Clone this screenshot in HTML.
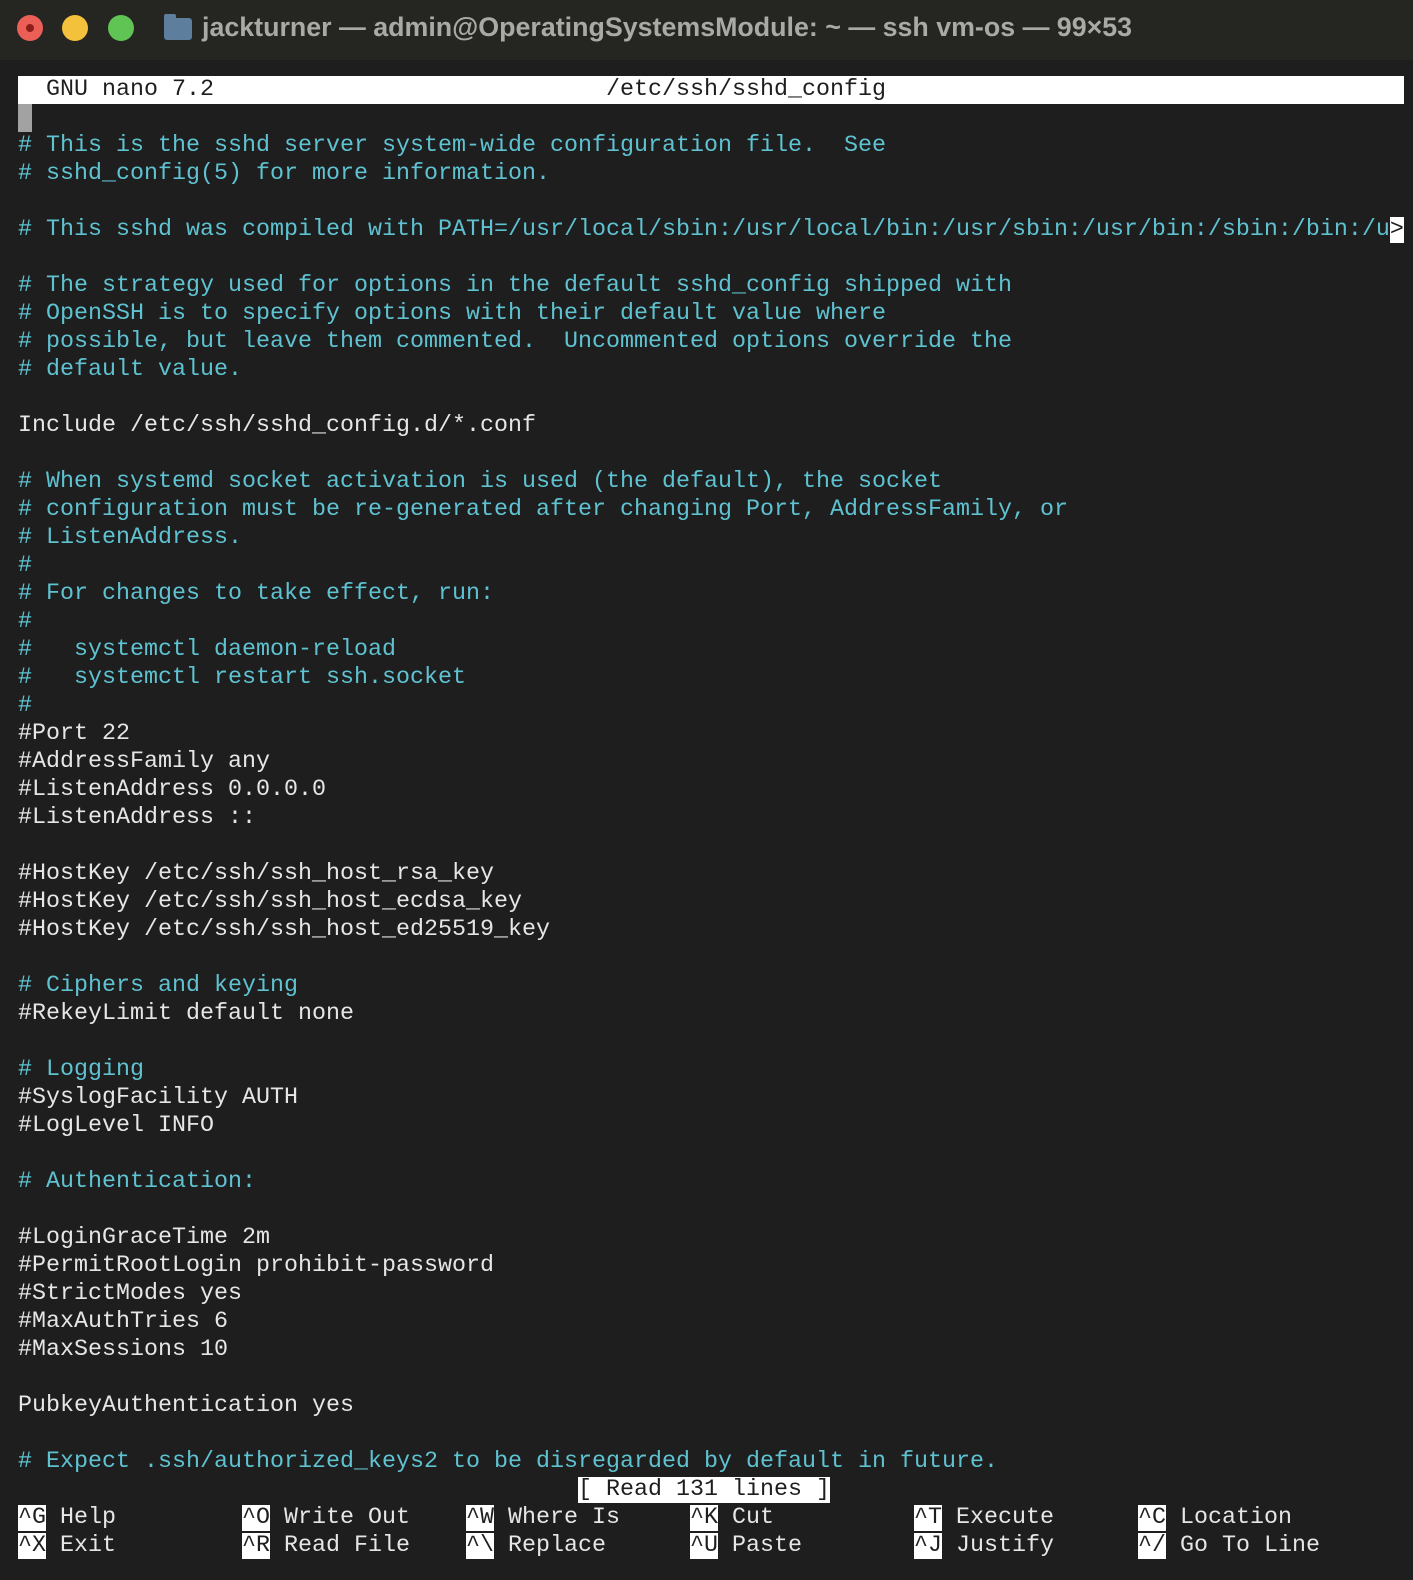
<!DOCTYPE html>
<html><head><meta charset="utf-8"><style>
html,body{margin:0;padding:0;background:#1e1e1e;}
body{width:1413px;height:1580px;position:relative;overflow:hidden;font-family:"Liberation Mono",monospace;}
.title{position:absolute;left:0;top:0;width:1413px;height:60px;background:#252522;}
.dot{position:absolute;top:15px;width:26px;height:26px;border-radius:50%;}
.ttext{position:absolute;left:202px;top:12px;font-family:"Liberation Sans",sans-serif;font-weight:bold;font-size:26.8px;color:#a9a9a6;white-space:nowrap;letter-spacing:0px;}
.folder{position:absolute;left:164px;top:18px;width:28px;height:22px;background:#5d7e9c;border-radius:3px;}
.folder:before{content:"";position:absolute;left:0;top:-4px;width:12px;height:6px;background:#5d7e9c;border-radius:2px 2px 0 0;}
pre{position:absolute;left:18px;top:76px;margin:0;font-family:"Liberation Mono",monospace;font-size:23.33px;line-height:28px;color:#e6e6e6;white-space:pre;}
.c{color:#5fc2d1;}
.inv{background:#fff;color:#1e1e1e;}
.bar{display:inline-block;width:1386px;background:#fff;color:#1e1e1e;height:28px;vertical-align:top;}
.cur{display:inline-block;width:14px;height:28px;background:#a2a2a2;vertical-align:top;}
</style></head><body>
<div class="title">
<div class="dot" style="left:17px;background:#ec5f56;"><div style="position:absolute;left:9px;top:9px;width:8px;height:8px;border-radius:50%;background:#8d1d18;"></div></div>
<div class="dot" style="left:62px;background:#f4c13c;"></div>
<div class="dot" style="left:108px;background:#5fc454;"></div>
<div class="folder"></div>
<div class="ttext">jackturner — admin@OperatingSystemsModule: ~ — ssh vm-os — 99×53</div>
</div>
<pre><span class="bar">  GNU nano 7.2                            /etc/ssh/sshd_config</span>
<span class="cur"></span>
<span class="c"># This is the sshd server system-wide configuration file.  See</span>
<span class="c"># sshd_config(5) for more information.</span>

<span class="c"># This sshd was compiled with PATH=/usr/local/sbin:/usr/local/bin:/usr/sbin:/usr/bin:/sbin:/bin:/u</span><span class="inv">&gt;</span>

<span class="c"># The strategy used for options in the default sshd_config shipped with</span>
<span class="c"># OpenSSH is to specify options with their default value where</span>
<span class="c"># possible, but leave them commented.  Uncommented options override the</span>
<span class="c"># default value.</span>

Include /etc/ssh/sshd_config.d/*.conf

<span class="c"># When systemd socket activation is used (the default), the socket</span>
<span class="c"># configuration must be re-generated after changing Port, AddressFamily, or</span>
<span class="c"># ListenAddress.</span>
<span class="c">#</span>
<span class="c"># For changes to take effect, run:</span>
<span class="c">#</span>
<span class="c">#   systemctl daemon-reload</span>
<span class="c">#   systemctl restart ssh.socket</span>
<span class="c">#</span>
#Port 22
#AddressFamily any
#ListenAddress 0.0.0.0
#ListenAddress ::

#HostKey /etc/ssh/ssh_host_rsa_key
#HostKey /etc/ssh/ssh_host_ecdsa_key
#HostKey /etc/ssh/ssh_host_ed25519_key

<span class="c"># Ciphers and keying</span>
#RekeyLimit default none

<span class="c"># Logging</span>
#SyslogFacility AUTH
#LogLevel INFO

<span class="c"># Authentication:</span>

#LoginGraceTime 2m
#PermitRootLogin prohibit-password
#StrictModes yes
#MaxAuthTries 6
#MaxSessions 10

PubkeyAuthentication yes

<span class="c"># Expect .ssh/authorized_keys2 to be disregarded by default in future.</span>
                                        <span class="inv">[ Read 131 lines ]</span>
<span class="inv">^G</span> Help         <span class="inv">^O</span> Write Out    <span class="inv">^W</span> Where Is     <span class="inv">^K</span> Cut          <span class="inv">^T</span> Execute      <span class="inv">^C</span> Location
<span class="inv">^X</span> Exit         <span class="inv">^R</span> Read File    <span class="inv">^\</span> Replace      <span class="inv">^U</span> Paste        <span class="inv">^J</span> Justify      <span class="inv">^/</span> Go To Line</pre>
</body></html>
